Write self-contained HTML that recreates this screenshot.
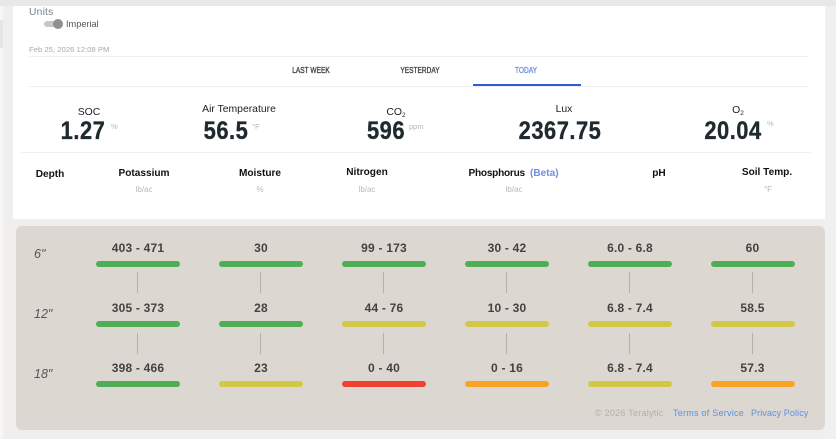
<!DOCTYPE html>
<html><head><meta charset="utf-8">
<style>
html,body{margin:0;padding:0}
body{width:836px;height:439px;position:relative;overflow:hidden;background:#f0efed;font-family:"Liberation Sans",sans-serif}
div{position:absolute;white-space:nowrap}
.c{transform:translateX(-50%)}
.lb{font-size:10.4px;color:#222;line-height:12px}
.num{font-size:25px;font-weight:bold;color:#1f2a2e;line-height:26px;transform:translateX(-50%) scaleX(.875);letter-spacing:.6px;-webkit-text-stroke:.35px #1f2a2e}
.u{font-size:7.5px;color:#b5b5b5;line-height:9px}
.h{font-size:10.1px;font-weight:bold;color:#111;line-height:12px}
.s{font-size:8px;color:#b8b8b8;line-height:10px}
.v{font-size:12px;font-weight:bold;color:#444240;line-height:14px;letter-spacing:.2px}
.b{height:6px;width:83.5px;border-radius:3px}
.g{background:#4fae55}.y{background:#d3c845}.r{background:#ee4130}.o{background:#f7a326}
.l{width:1px;height:21px;background:#b4b1ab}
.d{font-size:12.5px;font-style:italic;color:#555;line-height:14px}
.t{font-size:8px;color:#444;line-height:10px;transform:translateX(-50%) scaleX(.82);-webkit-text-stroke:.35px currentColor}
.hr{height:1px;background:#f0f0f0}
sub{font-size:6.5px;line-height:0;vertical-align:-2px}
</style></head><body>
<div style="left:0;top:0;width:836px;height:6px;background:#e8e8e8"></div>
<div style="left:0;top:6px;width:3px;height:433px;background:#f6f6f6"></div>
<div style="left:0;top:20px;width:3px;height:28px;background:#e6e6e6"></div>
<div style="left:13px;top:6px;width:812px;height:213px;background:#fff"></div>
<div style="left:825px;top:6px;width:11px;height:433px;background:#f0f0f0"></div>
<div style="left:16px;top:226px;width:809px;height:204px;background:#dcd8d1;border-radius:6px"></div>

<div style="left:29px;top:7px;font-size:10.3px;color:#75828e;line-height:12px;letter-spacing:.2px">Units</div>
<div style="left:44px;top:21px;width:19px;height:6px;border-radius:3px;background:#c6c6c6"></div>
<div style="left:53px;top:19px;width:10px;height:10px;border-radius:50%;background:#8f8f8f"></div>
<div style="left:66px;top:18px;font-size:9.2px;color:#555;line-height:12px">Imperial</div>
<div style="left:29px;top:45px;font-size:7.7px;color:#aaa;line-height:10px">Feb 25, 2026 12:08 PM</div>

<div class="hr" style="left:29px;top:56px;width:780px"></div>
<div class="hr" style="left:29px;top:86px;width:780px;background:#eee"></div>
<div class="t" style="left:310.5px;top:66px">LAST WEEK</div>
<div class="t" style="left:420px;top:66px">YESTERDAY</div>
<div class="t" style="left:526px;top:66px;color:#6f8fe0">TODAY</div>
<div style="left:473px;top:84px;width:108px;height:2px;background:#2f5bd8"></div>

<div class="lb c" style="left:89px;top:107px">SOC</div>
<div class="num" style="left:83px;top:118px">1.27</div>
<div class="u" style="left:111px;top:122px">%</div>
<div class="lb c" style="left:239px;top:104px">Air Temperature</div>
<div class="num" style="left:226px;top:118px">56.5</div>
<div class="u" style="left:252px;top:122px">°F</div>
<div class="lb c" style="left:396px;top:107px">CO<sub>2</sub></div>
<div class="num" style="left:386px;top:118px">596</div>
<div class="u" style="left:409px;top:122px">ppm</div>
<div class="lb c" style="left:564px;top:104px">Lux</div>
<div class="num" style="left:560px;top:118px">2367.75</div>
<div class="lb c" style="left:738px;top:105px">O<sub>2</sub></div>
<div class="num" style="left:733px;top:118px">20.04</div>
<div class="u" style="left:767px;top:119px">%</div>
<div class="hr" style="left:21px;top:152px;width:790px"></div>

<div class="h c" style="left:50px;top:169px">Depth</div>
<div class="h c" style="left:144px;top:168px">Potassium</div>
<div class="s c" style="left:144px;top:185px">lb/ac</div>
<div class="h c" style="left:260px;top:168px">Moisture</div>
<div class="s c" style="left:260px;top:185px">%</div>
<div class="h c" style="left:367px;top:167px">Nitrogen</div>
<div class="s c" style="left:367px;top:185px">lb/ac</div>
<div class="h" style="left:468.5px;top:168px;letter-spacing:-.25px">Phosphorus</div>
<div class="h" style="left:530px;top:168px;color:#6f8fe0">(Beta)</div>
<div class="s c" style="left:514px;top:185px">lb/ac</div>
<div class="h c" style="left:659px;top:168px">pH</div>
<div class="h c" style="left:767px;top:167px">Soil Temp.</div>
<div class="s c" style="left:768px;top:185px">°F</div>

<div class="d" style="left:34px;top:247px">6"</div>
<div class="d" style="left:34px;top:307px">12"</div>
<div class="d" style="left:34px;top:367px">18"</div>

<!-- col 1 -->
<div class="v c" style="left:138px;top:241px">403 - 471</div><div class="b g" style="left:96px;top:261px"></div>
<div class="l" style="left:137px;top:272px"></div>
<div class="v c" style="left:138px;top:301px">305 - 373</div><div class="b g" style="left:96px;top:321px"></div>
<div class="l" style="left:137px;top:333px"></div>
<div class="v c" style="left:138px;top:361px">398 - 466</div><div class="b g" style="left:96px;top:381px"></div>
<!-- col 2 -->
<div class="v c" style="left:261px;top:241px">30</div><div class="b g" style="left:219px;top:261px"></div>
<div class="l" style="left:260px;top:272px"></div>
<div class="v c" style="left:261px;top:301px">28</div><div class="b g" style="left:219px;top:321px"></div>
<div class="l" style="left:260px;top:333px"></div>
<div class="v c" style="left:261px;top:361px">23</div><div class="b y" style="left:219px;top:381px"></div>
<!-- col 3 -->
<div class="v c" style="left:384px;top:241px">99 - 173</div><div class="b g" style="left:342px;top:261px"></div>
<div class="l" style="left:383px;top:272px"></div>
<div class="v c" style="left:384px;top:301px">44 - 76</div><div class="b y" style="left:342px;top:321px"></div>
<div class="l" style="left:383px;top:333px"></div>
<div class="v c" style="left:384px;top:361px">0 - 40</div><div class="b r" style="left:342px;top:381px"></div>
<!-- col 4 -->
<div class="v c" style="left:507px;top:241px">30 - 42</div><div class="b g" style="left:465px;top:261px"></div>
<div class="l" style="left:506px;top:272px"></div>
<div class="v c" style="left:507px;top:301px">10 - 30</div><div class="b y" style="left:465px;top:321px"></div>
<div class="l" style="left:506px;top:333px"></div>
<div class="v c" style="left:507px;top:361px">0 - 16</div><div class="b o" style="left:465px;top:381px"></div>
<!-- col 5 -->
<div class="v c" style="left:630px;top:241px">6.0 - 6.8</div><div class="b g" style="left:588px;top:261px"></div>
<div class="l" style="left:629px;top:272px"></div>
<div class="v c" style="left:630px;top:301px">6.8 - 7.4</div><div class="b y" style="left:588px;top:321px"></div>
<div class="l" style="left:629px;top:333px"></div>
<div class="v c" style="left:630px;top:361px">6.8 - 7.4</div><div class="b y" style="left:588px;top:381px"></div>
<!-- col 6 -->
<div class="v c" style="left:752.500px;top:241px">60</div><div class="b g" style="left:711px;top:261px"></div>
<div class="l" style="left:752px;top:272px"></div>
<div class="v c" style="left:752.500px;top:301px">58.5</div><div class="b y" style="left:711px;top:321px"></div>
<div class="l" style="left:752px;top:333px"></div>
<div class="v c" style="left:752.500px;top:361px">57.3</div><div class="b o" style="left:711px;top:381px"></div>

<div style="left:595px;top:407px;font-size:9px;line-height:12px;color:#b3b0aa;letter-spacing:.25px">© 2026 Teralytic</div>
<div style="left:673px;top:407px;font-size:9px;line-height:12px;color:#5b8fe8;letter-spacing:.25px">Terms of Service</div>
<div style="left:751px;top:407px;font-size:9px;line-height:12px;color:#5b8fe8;letter-spacing:.1px">Privacy Policy</div>
</body></html>
